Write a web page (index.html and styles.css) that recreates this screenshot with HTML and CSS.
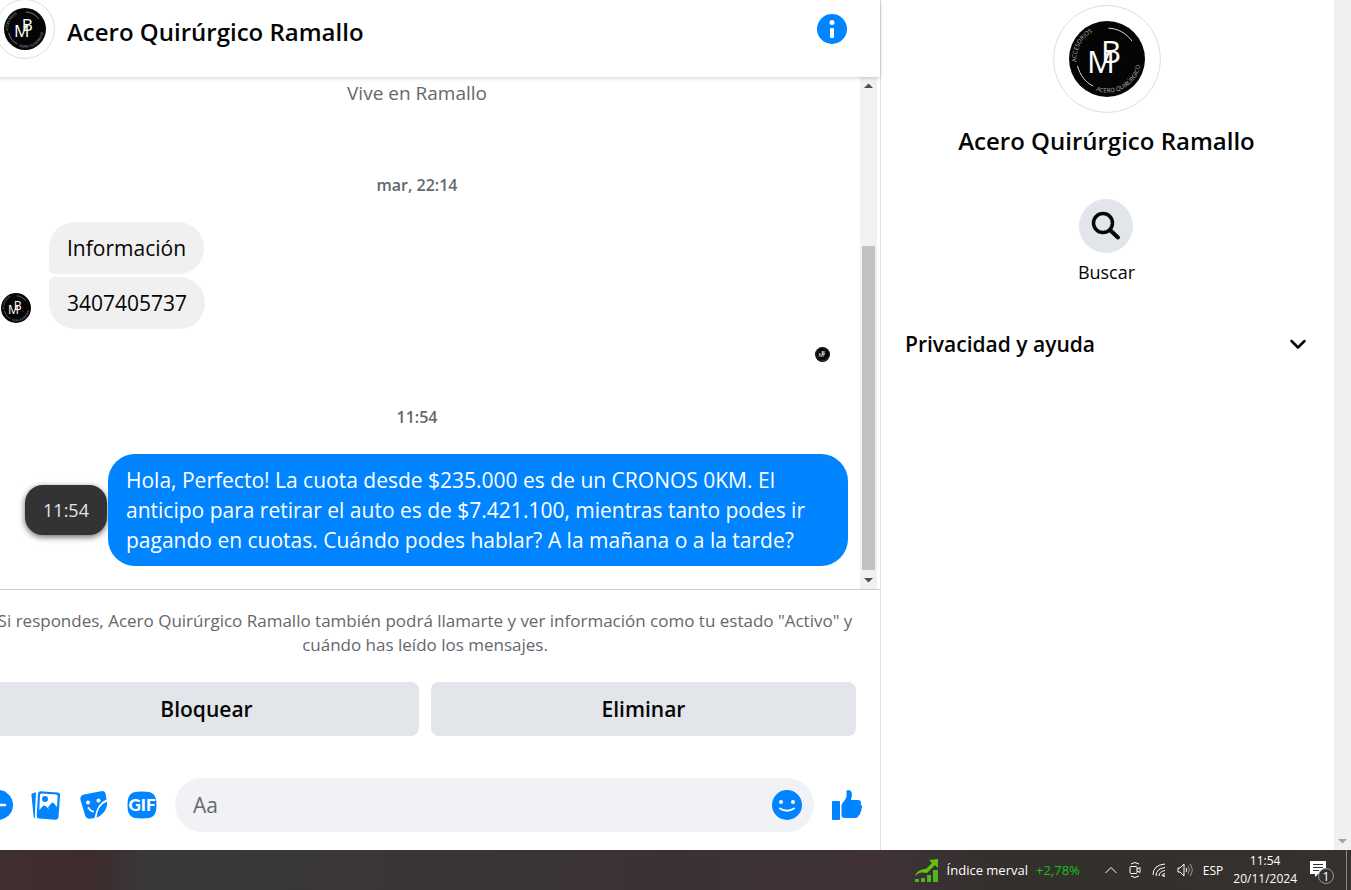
FILE: index.html
```html
<!DOCTYPE html>
<html lang="es">
<head>
  <meta charset="UTF-8">
  <meta name="viewport" content="width=device-width, initial-scale=1.0">
  <title>Acero Quirúrgico Ramallo</title>
  <link rel="stylesheet" href="styles.css">
</head>
<body>
  <!-- logo, used in four sizes -->
  <svg class="defs" width="0" height="0" aria-hidden="true">
    <symbol id="logo" viewBox="0 0 76 76">
      <path id="ring-top" d="M8 44A30.500 30.500 0 0 1 38 7.500" fill="none"/>
      <path id="ring-bottom" d="M27 69.500A33.500 33.500 0 0 0 69 24" fill="none"/>
      <circle cx="38" cy="38" r="38" fill="#050505"/>
      <path d="M39.500 7.200C49 7.500 57 12 63 20M8.500 45C11 54 16 61 24 65" fill="none" stroke="#ddd" stroke-width="1"/>
      <text class="logo-ring"><textPath href="#ring-top" startOffset="3">ACCESORIOS</textPath></text>
      <text class="logo-ring"><textPath href="#ring-bottom">ACERO QUIRÚRGICO</textPath></text>
      <text class="logo-letter" x="18" y="52">M</text>
      <text class="logo-letter" x="32" y="42">B</text>
    </symbol>
  </svg>

  <div class="window">
    <main class="chat">
      <header class="chat-header">
        <span class="avatar"><svg class="logo"><use href="#logo"/></svg></span>
        <h1>Acero Quirúrgico Ramallo</h1>
        <button class="icon-button" aria-label="Información de la conversación">
          <svg width="30" height="30" viewBox="0 0 30 30"><circle cx="15" cy="15" r="15" fill="#0084ff"/><circle cx="15" cy="8.500" r="2.500" fill="#fff"/><rect x="13" y="14" width="4" height="10" rx="1" fill="#fff"/></svg>
        </button>
      </header>

      <div class="conversation">
        <div class="messages">
          <p class="lives">Vive en Ramallo</p>
          <p class="time">mar, 22:14</p>
          <div class="incoming">
            <svg class="sender"><use href="#logo"/></svg>
            <div class="bubbles">
              <p class="bubble first">Información</p>
              <p class="bubble last">3407405737</p>
            </div>
          </div>
          <svg class="seen"><use href="#logo"/></svg>
          <p class="time">11:54</p>
          <div class="outgoing">
            <span class="tooltip">11:54</span>
            <p class="bubble mine">Hola, Perfecto! La cuota desde $235.000 es de un CRONOS 0KM. El anticipo para retirar el auto es de $7.421.100, mientras tanto podes ir pagando en cuotas. Cuándo podes hablar? A la mañana o a la tarde?</p>
          </div>
        </div>
        <div class="scrollbar">
          <svg width="17" height="17"><path d="M4 11h9L8.500 6.500z" fill="#505050"/></svg>
          <div class="track"><div class="thumb"></div></div>
          <svg width="17" height="17"><path d="M4 6h9L8.500 10.500z" fill="#505050"/></svg>
        </div>
      </div>

      <footer class="reply">
        <p class="notice">Si respondes, Acero Quirúrgico Ramallo también podrá llamarte y ver información como tu estado "Activo" y cuándo has leído los mensajes.</p>
        <div class="actions">
          <button>Bloquear</button>
          <button>Eliminar</button>
        </div>
        <form class="composer">
          <button type="button" class="icon-button" aria-label="Más acciones">
            <svg width="30" height="30" viewBox="0 0 30 30"><circle cx="15" cy="15" r="15" fill="#0084ff"/><path d="M8 15h14M15 8v14" stroke="#fff" stroke-width="2.500" stroke-linecap="round"/></svg>
          </button>
          <button type="button" class="icon-button" aria-label="Adjuntar foto">
            <svg width="30" height="30" viewBox="0 0 30 30">
              <path d="M1 3.500L5 2.200 3.800 26q0 2 1.200 2.500Q2.800 28.500 2.500 26L.5 5.500Q.3 4 1 3.500z" fill="#0084ff"/>
              <path d="M9.500 1.200L26.500 2.500Q29.300 2.700 29 5.500L27.500 27Q27.200 30 24.500 29.700L8 28.500Q5.500 28.200 5.700 25.500L7 3.700Q7.200 1 9.500 1.200z" fill="#0084ff"/>
              <path d="M10.500 3.500L25 4.500Q26.800 4.700 26.700 6.500L26 17 22.500 13Q21.500 12 20.500 13L17 17.500 19 20 14.500 16Q13.200 15 12 16L8.300 20 9 5Q9.200 3.500 10.500 3.500z" fill="#fff"/>
              <circle cx="14" cy="9" r="3" fill="#0084ff"/>
            </svg>
          </button>
          <button type="button" class="icon-button" aria-label="Elegir un sticker">
            <svg width="30" height="30" viewBox="0 0 30 30">
              <path d="M5 4.500L22 1.200Q26 .5 26.800 4.500L27.500 9.500Q18 13 15.500 28L11 28.800Q7 29 6 25L1.500 10Q.5 5.500 5 4.500z" fill="#0084ff"/>
              <path d="M28 11.500Q28.500 19 24 23 21.500 26 17.500 27.800 18.500 15.500 28 11.500z" fill="#0084ff"/>
              <circle cx="9" cy="12.500" r="2" fill="#fff"/><circle cx="19.500" cy="10.500" r="2" fill="#fff"/>
              <path d="M9.500 18Q11.500 21 14 21.500" fill="none" stroke="#fff" stroke-width="2" stroke-linecap="round"/>
            </svg>
          </button>
          <button type="button" class="icon-button" aria-label="Elegir un GIF">
            <svg width="30" height="30" viewBox="0 0 30 30"><path d="M15 1.500C26 1.500 29.500 4 29.500 15S26 28.500 15 28.500.5 26 .5 15 4 1.500 15 1.500z" fill="#0084ff"/><text class="gif" x="15" y="21" text-anchor="middle">GIF</text></svg>
          </button>
          <div class="field">
            <input type="text" placeholder="Aa" aria-label="Mensaje">
            <button type="button" class="icon-button" aria-label="Elegir un emoji">
              <svg width="30" height="30" viewBox="0 0 30 30"><circle cx="15" cy="15" r="15" fill="#0084ff"/><circle cx="9" cy="12" r="2" fill="#fff"/><circle cx="21" cy="12" r="2" fill="#fff"/><path d="M8 18.500Q15 23 22 18.500" fill="none" stroke="#fff" stroke-width="2" stroke-linecap="round"/></svg>
            </button>
          </div>
          <button type="button" class="icon-button" aria-label="Enviar Me gusta">
            <svg width="30" height="30" viewBox="0 0 30 30" fill="#0084ff"><rect y="11" width="8" height="19" rx="1"/><path d="M14.500 1Q14.800 0 16.500 0 20.500.5 19.800 6L19 10H26.500Q29.500 10.500 29 13L28.500 14Q31 16 29.300 19 30 21 28.300 22.500 28.500 25 26.500 25.500 26 28 23 28H13Q9.500 28 9.500 25V15.500Q9.500 14 11 12.500 14.500 8 14.500 6z"/></svg>
          </button>
        </form>
      </footer>
    </main>

    <aside class="details">
      <span class="avatar large"><svg class="logo"><use href="#logo"/></svg></span>
      <h2>Acero Quirúrgico Ramallo</h2>
      <button class="search">
        <span class="search-icon"><svg width="30" height="30" viewBox="0 0 30 30" fill="none" stroke="#050505" stroke-linecap="round"><circle cx="12" cy="12" r="9.500" stroke-width="3.500"/><path d="M19.500 19.500L27 26.500" stroke-width="4"/></svg></span>
        Buscar
      </button>
      <button class="privacy">
        Privacidad y ayuda
        <svg width="18" height="18" viewBox="0 0 18 18"><path d="M2.500 6L9 12.500 15.500 6" fill="none" stroke="#050505" stroke-width="2.500" stroke-linecap="round" stroke-linejoin="round"/></svg>
      </button>
    </aside>
    <div class="page-scroll"><svg width="17" height="17"><path d="M4 6h9L8.500 10.500z" fill="#a3a3a3"/></svg></div>
  </div>

  <div class="taskbar">
    <a class="market" href="#">
      <svg width="24" height="24" viewBox="0 0 24 24" fill="#5fc20e"><path d="M0 24v-3h4v3zM6 24v-4h4v4zM12 24v-7h4v7zM18 24V12h5v12z" fill="#4fb51b"/><path d="M0 18C2 13 6 11 11 11L17 5 14 2 23 1V10L20 7 12 15C7 14 4 14 0 18z"/></svg>
      <span>Índice merval</span>
      <span class="up">+2,78%</span>
    </a>
    <div class="tray">
      <svg width="14" height="16" viewBox="0 0 14 16"><path d="M1.500 11L7 5.500 12.500 11"/></svg>
      <svg width="12" height="18" viewBox="0 0 12 18"><rect x="1" y="5.500" width="7" height="7" rx="1"/><path d="M8 8l3-1.500v5L8 10M2 3Q6 0 10 3M2 15Q6 18 10 15"/></svg>
      <svg width="14" height="16" viewBox="0 0 14 16"><path d="M1 13Q1 3 13 2M4 14Q4 6.500 13 5.500M7 14Q7 9.500 13 8.500M10 14Q10 12 13 11.500"/><circle cx="12" cy="14" r="1" fill="#fff"/></svg>
      <svg width="16" height="16" viewBox="0 0 16 16"><path d="M1 6h2l4-4v12L3 10H1zM9 6q1.500 2 0 4"/><path d="M11 4q3 4 0 8M13 2q4.500 6 0 12" opacity=".5"/></svg>
    </div>
    <span class="lang">ESP</span>
    <div class="clock"><span>11:54</span><span>20/11/2024</span></div>
    <button class="notifications" aria-label="Notificaciones">
      <svg width="25" height="28" viewBox="0 0 25 28"><path d="M0 5h16v13H8l-3 3v-3H0z" fill="#fff"/><path d="M3 8.500h10M3 11.500h10M3 14.500h6" stroke="#333"/><circle cx="16" cy="20" r="7.500" fill="#35312f" stroke="#999"/><text class="count" x="16" y="25" text-anchor="middle">1</text></svg>
    </button>
    <div class="show-desktop"></div>
  </div>
</body>
</html>
```
FILE: styles.css
```css
* {
  box-sizing: border-box;
}

body {
  margin: 0;
  height: 100vh;
  display: flex;
  flex-direction: column;
  overflow: hidden;
  font-family: "Open Sans", "Noto Sans", sans-serif;
  color: #050505;
  background: #fff;
}

h1, h2, p {
  margin: 0;
}

h1, h2 {
  font-size: 24px;
  line-height: 32px;
  font-weight: 600;
}

button {
  padding: 0;
  border: none;
  background: none;
  font-family: inherit;
  color: inherit;
  cursor: pointer;
}

svg {
  display: block;
  flex-shrink: 0;
}

.defs {
  position: absolute;
}

.logo-letter {
  font-family: "Open Sans", sans-serif;
  font-size: 31px;
  font-weight: 400;
  fill: #fff;
}

.logo-ring {
  font-family: "Open Sans", sans-serif;
  font-size: 6px;
  fill: #bbb;
}

.window {
  flex: 1;
  min-height: 0;
  display: flex;
}

/* conversation */
.chat {
  flex: 1;
  min-width: 0;
  margin-left: -26px;
  display: flex;
  flex-direction: column;
}

.chat-header {
  position: relative;
  display: flex;
  align-items: center;
  gap: 12px;
  height: 77px;
  padding: 0 33px 20px 21px;
  box-shadow: 0 1px 4px rgba(0, 0, 0, 0.2);
}

.chat-header h1 {
  flex: 1;
  padding-top: 6px;
}

.avatar {
  display: flex;
  align-items: center;
  justify-content: center;
  flex-shrink: 0;
  width: 60px;
  height: 60px;
  border: 1px solid #dedede;
  border-radius: 50%;
}

.avatar .logo {
  width: 42px;
  height: 42px;
}

.avatar.large {
  width: 108px;
  height: 108px;
}

.avatar.large .logo {
  width: 76px;
  height: 76px;
}

.conversation {
  flex: 1;
  min-height: 0;
  display: flex;
  padding-right: 3px;
}

.messages {
  flex: 1;
  min-width: 0;
  display: flex;
  flex-direction: column;
  justify-content: flex-end;
  padding-bottom: 23px;
}

.lives,
.time {
  text-align: center;
  color: #65676b;
  line-height: 24px;
}

.lives {
  font-size: 19px;
  margin-bottom: 68px;
}

.time {
  font-size: 16px;
  font-weight: 600;
  margin-bottom: 25px;
}

.incoming {
  display: flex;
  align-items: flex-end;
  gap: 18px;
  padding-left: 27px;
}

.sender {
  width: 30px;
  height: 30px;
  margin-bottom: 6px;
}

.bubbles {
  display: flex;
  flex-direction: column;
  align-items: flex-start;
  gap: 3px;
}

.bubble {
  padding: 11px 18px;
  border-radius: 27px;
  font-size: 21px;
  line-height: 30px;
  background: #f0f0f0;
}

.bubble.first {
  border-bottom-left-radius: 6px;
}

.bubble.last {
  border-top-left-radius: 6px;
}

.bubble.mine {
  flex: 0 1 740px;
  color: #fff;
  background: #0084ff;
}

.seen {
  width: 15px;
  height: 15px;
  margin: 18px 30px 43px auto;
}

.outgoing {
  display: flex;
  align-items: center;
  justify-content: flex-end;
  gap: 1px;
  padding: 0 12px;
}

.tooltip {
  flex-shrink: 0;
  width: 82px;
  padding: 13px 0;
  border-radius: 18px;
  text-align: center;
  font-size: 18px;
  line-height: 24px;
  color: #e4e6eb;
  background: #333;
  box-shadow: 0 2px 6px rgba(0, 0, 0, 0.6);
}

.scrollbar {
  display: flex;
  flex-direction: column;
  width: 17px;
  background: #f1f1f1;
}

.track {
  flex: 1;
  display: flex;
  flex-direction: column;
  justify-content: flex-end;
  padding-bottom: 2px;
}

.thumb {
  height: 68%;
  margin: 0 2px;
  background: #c1c1c1;
}

/* reply area */
.reply {
  padding: 19px 24px 18px 20px;
  border-top: 1px solid #ccc;
}

.notice {
  text-align: center;
  font-size: 17px;
  line-height: 24px;
  color: #65676b;
}

.actions {
  display: flex;
  gap: 12px;
  margin: 25px 0 42px;
}

.actions button {
  flex: 1;
  height: 54px;
  border-radius: 8px;
  font-size: 21px;
  font-weight: 600;
  background: #e2e5e9;
}

.composer {
  display: flex;
  align-items: center;
  gap: 18px;
  margin: 0 -6px 0 -11px;
}

.field {
  flex: 1;
  min-width: 0;
  display: flex;
  align-items: center;
  height: 54px;
  padding: 0 12px 0 18px;
  border-radius: 27px;
  background: #f0f2f5;
}

.field input {
  flex: 1;
  min-width: 0;
  padding: 0;
  border: none;
  outline: none;
  font: 21px "Open Sans", sans-serif;
  background: none;
}

.field input::placeholder {
  color: #65676b;
}

.gif {
  font-family: Lato, sans-serif;
  font-size: 17px;
  font-weight: 900;
  fill: #fff;
}

/* right panel */
.details {
  display: flex;
  flex-direction: column;
  align-items: center;
  width: 454px;
  padding: 5px 26px 5px 24px;
  border-left: 1px solid #e0e0e0;
}

.details h2 {
  margin: 12px 0 42px;
}

.search {
  display: flex;
  flex-direction: column;
  align-items: center;
  gap: 7px;
  font-size: 18px;
  line-height: 24px;
}

.search-icon {
  display: flex;
  align-items: center;
  justify-content: center;
  width: 54px;
  height: 54px;
  border-radius: 50%;
  background: #e2e5e9;
}

.privacy {
  display: flex;
  align-items: center;
  justify-content: space-between;
  width: 100%;
  margin-top: 45px;
  padding-right: 1px;
  font-size: 21px;
  line-height: 30px;
  font-weight: 600;
}

.page-scroll {
  display: flex;
  align-items: flex-end;
  width: 17px;
  background: #f0f0f0;
}

/* taskbar */
.taskbar {
  display: flex;
  align-items: center;
  justify-content: flex-end;
  height: 40px;
  color: #fff;
  font-size: 12px;
  background: linear-gradient(90deg, #402f30, #3e2b2d 7%, #37393a 11%, #393735 22%, #3a3536 35%, #3b3134 50%, #403236 65%, #332f2d 74%, #35312f);
}

.market {
  display: flex;
  align-items: center;
  gap: 8px;
  font-size: 13px;
  color: #fff;
  text-decoration: none;
}

.up {
  color: #13c313;
}

.tray {
  display: flex;
  align-items: center;
  gap: 11px;
  margin: 0 10px 0 24px;
}

.tray path,
.tray rect {
  fill: none;
  stroke: #fff;
}

.clock {
  display: flex;
  flex-direction: column;
  align-items: center;
  margin: 0 13px 0 10px;
  line-height: 18px;
}

.notifications {
  margin-right: 11px;
}

.count {
  font-size: 13px;
  fill: #fff;
}

.show-desktop {
  width: 5px;
  height: 100%;
  border-left: 1px solid #8a8686;
}
```
